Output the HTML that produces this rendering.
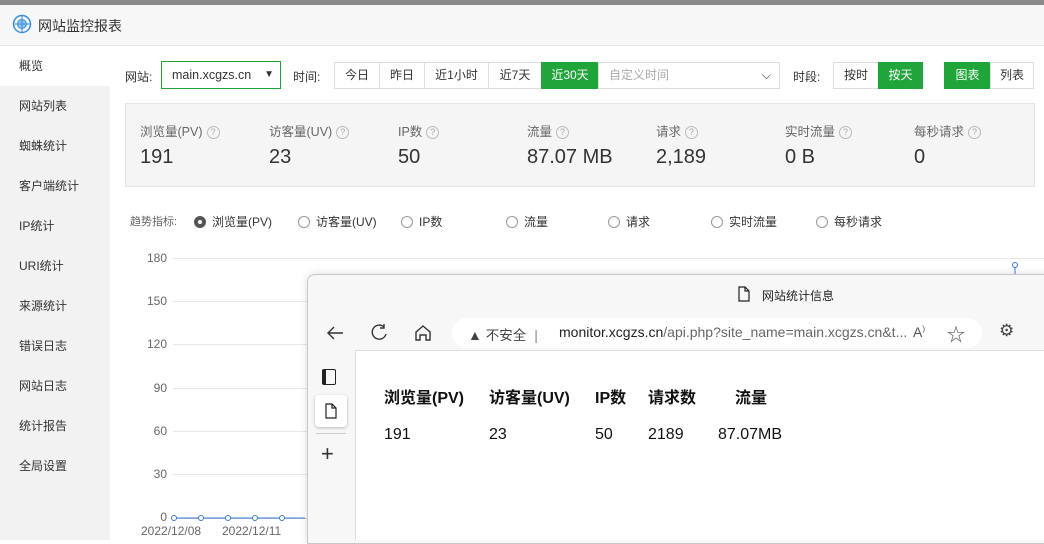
<!DOCTYPE html><html><head><meta charset="utf-8"><style>
*{margin:0;padding:0;box-sizing:border-box}
body{width:1044px;height:540px;overflow:hidden;background:#fff;font-family:"Liberation Sans","Noto Sans CJK SC",sans-serif;font-size:13px;color:#333;position:relative}
.a{position:absolute}
.btn{position:absolute;top:62px;height:27px;border:1px solid #ddd;line-height:25px;text-align:center;font-size:12px;background:#fff}
.g{background:#20a53a;color:#fff;border-color:#20a53a}
.side div{height:40px;line-height:40px;padding-left:19px;font-size:12px}
.lab{font-size:12.5px;color:#666}
.q{display:inline-block;width:13px;height:13px;border:1px solid #bbb;border-radius:50%;font-size:9px;line-height:11px;text-align:center;color:#aaa;margin-left:4px;vertical-align:1px}
.val{font-size:20px;color:#333}
.r{position:absolute;top:213px;font-size:12px}
.r i{display:inline-block;width:12px;height:12px;border:1px solid #999;border-radius:50%;vertical-align:-2px;margin-right:6px}
.yl{position:absolute;left:130px;width:37px;text-align:right;font-size:12px;color:#666}
.gl{position:absolute;left:173px;width:880px;height:1px;background:#e8e8e8}
.h{position:absolute;top:384px;font-size:16px;font-weight:bold;color:#111}
.v{position:absolute;top:426px;font-size:16px;color:#111}
</style></head><body>
<div class="a" style="left:0;top:0;width:1044px;height:5px;background:#8a8a8a"></div>
<div class="a" style="left:0;top:5px;width:1044px;height:41px;background:#f7f7f7;border-bottom:1px solid #e6e6e6"></div>
<svg class="a" style="left:12px;top:14px" width="20" height="20" viewBox="0 0 20 20"><circle cx="10" cy="10" r="8.5" fill="none" stroke="#3a8fd6" stroke-width="1.5"/><circle cx="10" cy="10" r="4.5" fill="#8fc4ee" stroke="#3a8fd6"/><path d="M10 1v18M1 10h18" stroke="#3a8fd6" stroke-width="1"/></svg>
<div class="a" style="left:38px;top:16px;font-size:14px;color:#333">网站监控报表</div>
<div class="a side" style="left:0;top:46px;width:110px;height:494px;background:#f2f2f2">
<div style="background:#fff">概览</div><div>网站列表</div><div>蜘蛛统计</div><div>客户端统计</div><div>IP统计</div><div>URI统计</div><div>来源统计</div><div>错误日志</div><div>网站日志</div><div>统计报告</div><div>全局设置</div></div>
<div class="a" style="left:125px;top:68px;font-size:12px">网站:</div>
<div class="a" style="left:161px;top:61px;width:120px;height:28px;border:1px solid #20a53a;font-size:12.5px;line-height:26px;padding-left:10px">main.xcgzs.cn<span style="position:absolute;right:6px;top:0;font-size:10px">▼</span></div>
<div class="a" style="left:293px;top:68px;font-size:12px">时间:</div>
<div class="btn" style="left:334px;width:46px">今日</div>
<div class="btn" style="left:379px;width:46px">昨日</div>
<div class="btn" style="left:424px;width:65px">近1小时</div>
<div class="btn" style="left:488px;width:54px">近7天</div>
<div class="btn g" style="left:541px;width:58px">近30天</div>
<div class="btn" style="left:598px;width:182px;text-align:left;padding-left:10px;color:#aaa">自定义时间<span style="position:absolute;right:8px;color:#333">⌵</span></div>
<div class="a" style="left:793px;top:68px;font-size:12px">时段:</div>
<div class="btn" style="left:833px;width:46px">按时</div>
<div class="btn g" style="left:878px;width:45px">按天</div>
<div class="btn g" style="left:944px;width:47px">图表</div>
<div class="btn" style="left:990px;width:44px">列表</div>
<div class="a" style="left:125px;top:103px;width:910px;height:84px;background:#f5f5f5;border:1px solid #e6e6e6"></div>
<div class="a lab" style="left:140px;top:121px">浏览量(PV)<span class="q">?</span></div><div class="a val" style="left:140px;top:146px">191</div>
<div class="a lab" style="left:269px;top:121px">访客量(UV)<span class="q">?</span></div><div class="a val" style="left:269px;top:146px">23</div>
<div class="a lab" style="left:398px;top:121px">IP数<span class="q">?</span></div><div class="a val" style="left:398px;top:146px">50</div>
<div class="a lab" style="left:527px;top:121px">流量<span class="q">?</span></div><div class="a val" style="left:527px;top:146px">87.07 MB</div>
<div class="a lab" style="left:656px;top:121px">请求<span class="q">?</span></div><div class="a val" style="left:656px;top:146px">2,189</div>
<div class="a lab" style="left:785px;top:121px">实时流量<span class="q">?</span></div><div class="a val" style="left:785px;top:146px">0 B</div>
<div class="a lab" style="left:914px;top:121px">每秒请求<span class="q">?</span></div><div class="a val" style="left:914px;top:146px">0</div>
<div class="r" style="left:130px;color:#666;font-size:11px">趋势指标:</div>
<div class="r" style="left:194px"><i style="border:4px solid #555;background:#fff"></i>浏览量(PV)</div>
<div class="r" style="left:298px"><i></i>访客量(UV)</div>
<div class="r" style="left:401px"><i></i>IP数</div>
<div class="r" style="left:506px"><i></i>流量</div>
<div class="r" style="left:608px"><i></i>请求</div>
<div class="r" style="left:711px"><i></i>实时流量</div>
<div class="r" style="left:816px"><i></i>每秒请求</div>
<div class="yl" style="top:251px">180</div><div class="gl" style="top:258px"></div>
<div class="yl" style="top:294px">150</div><div class="gl" style="top:301px"></div>
<div class="yl" style="top:337px">120</div><div class="gl" style="top:344px"></div>
<div class="yl" style="top:381px">90</div><div class="gl" style="top:388px"></div>
<div class="yl" style="top:424px">60</div><div class="gl" style="top:431px"></div>
<div class="yl" style="top:467px">30</div><div class="gl" style="top:474px"></div>
<div class="yl" style="top:510px">0</div><div class="gl" style="top:518px;background:#ccc"></div>
<svg class="a" style="left:165px;top:512px" width="150" height="12"><path d="M9 6H140" stroke="#3a7bd5"/><g fill="#fff" stroke="#3a7bd5"><circle cx="9" cy="6" r="2.5"/><circle cx="36" cy="6" r="2.5"/><circle cx="63" cy="6" r="2.5"/><circle cx="90" cy="6" r="2.5"/><circle cx="117" cy="6" r="2.5"/></g></svg>
<div class="a" style="left:141px;top:524px;font-size:12px;color:#666">2022/12/08</div>
<div class="a" style="left:222px;top:524px;font-size:12px;color:#666">2022/12/11</div>
<svg class="a" style="left:1010px;top:260px" width="10" height="20"><circle cx="5" cy="5" r="2.5" fill="#fff" stroke="#3a7bd5"/><path d="M5 8v12" stroke="#3a7bd5"/></svg>
<div class="a" style="left:307px;top:274px;width:740px;height:270px;background:#f7f7f7;border:1px solid #c8c8c8;border-radius:8px 0 0 0;box-shadow:0 0 8px rgba(0,0,0,.15)"></div>
<svg class="a" style="left:737px;top:286px" width="14" height="16"><path d="M2 1h6l4 4v10H2z M8 1v4h4" fill="none" stroke="#222" stroke-width="1.2"/></svg>
<div class="a" style="left:762px;top:287px;font-size:12px;color:#222">网站统计信息</div>
<svg class="a" style="left:324px;top:322px" width="22" height="22" fill="none" stroke="#333" stroke-width="1.4"><path d="M19 11H4M10 5l-6 6 6 6"/></svg>
<svg class="a" style="left:368px;top:322px" width="22" height="22" fill="none" stroke="#333" stroke-width="1.4"><path d="M16 5A7 7 0 1 0 18 12M16 2v4h-4"/></svg>
<svg class="a" style="left:412px;top:322px" width="22" height="22" fill="none" stroke="#333" stroke-width="1.4"><path d="M4 10l7-6 7 6v8h-4v-5h-6v5H4z"/></svg>
<div class="a" style="left:452px;top:318px;width:530px;height:30px;background:#fff;border-radius:15px"></div>
<div class="a" style="left:468px;top:324px;font-size:14px;color:#444">▲ <span style="font-size:13.5px">不安全</span><span style="color:#888;margin:0 8px">|</span></div>
<div class="a" style="left:559px;top:324px;font-size:14px;color:#222">monitor.xcgzs.cn<span style="color:#666">/api.php?site_name=main.xcgzs.cn&amp;t...</span></div>
<div class="a" style="left:913px;top:324px;font-size:14px;color:#555">A<sup style="font-size:8px">)</sup></div>
<div class="a" style="left:947px;top:321px;font-size:18px;color:#555">☆</div>
<div class="a" style="left:999px;top:321px;font-size:17px;color:#444">⚙</div>
<div class="a" style="left:355px;top:350px;width:690px;height:190px;background:#fff;border-top:1px solid #ddd;border-left:1px solid #ddd"></div>
<div class="a" style="left:322px;top:369px;width:14px;height:16px;border:1.5px solid #222;border-left-width:4px;border-radius:2px"></div>
<div class="a" style="left:315px;top:395px;width:32px;height:32px;background:#fff;border-radius:4px;box-shadow:0 1px 3px rgba(0,0,0,.25)"></div>
<svg class="a" style="left:324px;top:403px" width="14" height="16"><path d="M2 1h6l4 4v10H2z M8 1v4h4" fill="none" stroke="#222" stroke-width="1.2"/></svg>
<div class="a" style="left:316px;top:433px;width:30px;height:1px;background:#ccc"></div>
<div class="a" style="left:321px;top:441px;font-size:22px;color:#333;font-weight:300">+</div>
<div class="h" style="left:384px">浏览量(PV)</div>
<div class="h" style="left:489px">访客量(UV)</div>
<div class="h" style="left:595px">IP数</div>
<div class="h" style="left:648px">请求数</div>
<div class="h" style="left:735px">流量</div>
<div class="v" style="left:384px">191</div>
<div class="v" style="left:489px">23</div>
<div class="v" style="left:595px">50</div>
<div class="v" style="left:648px">2189</div>
<div class="v" style="left:718px">87.07MB</div>
</body></html>
